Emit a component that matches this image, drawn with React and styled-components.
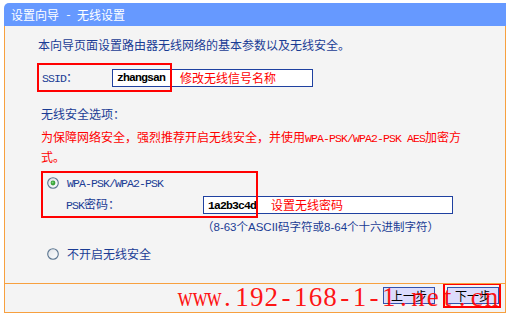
import React from "react";
import styled, { createGlobalStyle } from "styled-components";

const BLUE = "#1a3c94";
const ORANGE = "#f7a03f";
const RED = "#ff0000";
const CJK = `"Noto Sans CJK SC", "Noto Sans", sans-serif`;

const Global = createGlobalStyle`
  html, body { margin: 0; padding: 0; background: #ffffff; }
  body { font-family: ${CJK}; font-size: 12px; }
`;

const Panel = styled.div`
  width: 502px;
  margin: 3px 0 0 4px;
  box-sizing: border-box;
`;

const TitleBar = styled.div`
  height: 23px;
  background: #6699ff;
  border-top-left-radius: 5px;
  color: #ffffff;
  display: flex;
  align-items: center;
  padding-left: 7px;
  font-size: 12px;
  line-height: 14px;
`;

const Body = styled.div`
  height: 257px;
  box-sizing: border-box;
  background: #f4f4f4;
  border-left: 1px solid ${ORANGE};
  border-right: 1px solid ${ORANGE};
  padding: 10px 0 0 36px;
  color: ${BLUE};
`;

const Latin = styled.span`
  font-family: "Liberation Mono", monospace;
  font-size: 11.5px;
  letter-spacing: -0.9px;
`;

const Line = styled.div`
  line-height: 18px;
  margin-left: ${(p) => p.$indent || 0}px;
  margin-top: ${(p) => p.$top || 0}px;
  color: ${(p) => (p.$red ? RED : BLUE)};
  width: ${(p) => (p.$width ? `${p.$width}px` : "auto")};
`;

const SsidRow = styled.div`
  position: relative;
  height: 29px;
  margin-top: 9px;
  display: flex;
  align-items: center;
  padding-left: 1px;
`;

const Frame = styled.div`
  position: absolute;
  left: ${(p) => p.$left}px;
  top: 0;
  width: ${(p) => p.$width}px;
  height: 100%;
  box-sizing: border-box;
  border: 2px solid #ff0000;
  pointer-events: none;
  z-index: 2;
`;

const Label = styled.div`
  width: ${(p) => p.$width}px;
  flex: none;
  line-height: 18px;
`;

const Field = styled.div`
  width: ${(p) => p.$width}px;
  height: 18px;
  box-sizing: border-box;
  border: 1px solid #1f41a0;
  background: #ffffff;
  display: flex;
  align-items: center;
  padding-left: 4px;
  flex: none;
`;

const FieldValue = styled.span`
  font-family: "Liberation Mono", monospace;
  font-size: 11.5px;
  letter-spacing: -0.9px;
  font-weight: bold;
  color: #000000;
  width: ${(p) => p.$width}px;
  flex: none;
`;

const Note = styled.span`
  color: ${RED};
  font-size: 12px;
  line-height: 16px;
`;

const WpaBlock = styled.div`
  position: relative;
  margin-top: 5px;
  padding: 3px 0 4px 0;
`;

const RadioRow = styled.div`
  display: flex;
  align-items: center;
  height: 18px;
  padding-left: 6px;
  margin-top: ${(p) => p.$top || 0}px;
`;

const RadioLabel = styled.span`
  margin-left: 8px;
  line-height: 18px;
`;

const PskRow = styled.div`
  display: flex;
  align-items: center;
  height: 18px;
  margin-top: 4px;
  padding-left: 25px;
`;

const Hint = styled.div`
  margin-left: 161px;
  line-height: 18px;
  font-family: "Liberation Sans", ${CJK};
  font-size: 11.5px;
  color: ${BLUE};
`;

const Footer = styled.div`
  position: relative;
  height: 25px;
  background: #f4f4f4;
  border: 1px solid ${ORANGE};
  display: flex;
  justify-content: flex-end;
  align-items: flex-start;
  gap: 12px;
  padding: 3px 6px 0 0;
  box-sizing: content-box;
  overflow: hidden;
`;

const ButtonWrap = styled.div`
  position: relative;
`;

const Button = styled.button`
  width: 52px;
  height: 17px;
  box-sizing: border-box;
  border: 1px solid #3152ad;
  background: #dcdcfc;
  color: #000000;
  font-family: ${CJK};
  font-size: 12px;
  line-height: 15px;
  padding: 0;
  display: block;
`;

const ButtonFrame = styled.div`
  position: absolute;
  left: -4px;
  top: -4px;
  right: -2px;
  bottom: -4px;
  border: 2px solid #ff0000;
  pointer-events: none;
  z-index: 2;
`;

const Watermark = styled.div`
  position: absolute;
  left: 171px;
  top: 0;
  display: flex;
  font-family: "Liberation Serif", serif;
  font-size: 27px;
  line-height: 27px;
  color: rgba(255, 0, 0, 0.92);
  pointer-events: none;
  white-space: nowrap;
  z-index: 1;
`;

const Glyph = styled.span`
  display: inline-block;
  width: 14.68px;
  text-align: center;
  transform: ${(p) => (p.$narrow ? "scaleX(0.78)" : "none")};
`;

function Radio({ checked }) {
  const id = checked ? "rg1" : "rg2";
  return (
    <svg width="12" height="12" viewBox="0 0 12 12" style={{ flex: "none" }}>
      <defs>
        <linearGradient id={id} x1="0" y1="0" x2="1" y2="1">
          <stop offset="0" stopColor="#dfe3e8" />
          <stop offset="1" stopColor="#ffffff" />
        </linearGradient>
      </defs>
      <circle cx="6" cy="6" r="5.3" fill={`url(#${id})`} stroke="#5b7590" strokeWidth="1.1" />
      {checked && <circle cx="6" cy="6" r="2.4" fill="#3aa23a" />}
      {checked && <circle cx="5.6" cy="5.6" r="1" fill="#7bd87b" />}
    </svg>
  );
}

const WM = "www.192-168-1-1.net.cn";

export default function App() {
  return (
    <>
      <Global />
      <Panel>
        <TitleBar>
          设置向导<Latin>{"\u00a0-\u00a0"}</Latin>无线设置
        </TitleBar>
        <Body>
          <Line $indent={-3}>本向导页面设置路由器无线网络的基本参数以及无线安全。</Line>
          <SsidRow>
            <Label $width={70}>
              <Latin>SSID</Latin>：
            </Label>
            <Field $width={201}>
              <FieldValue $width={63}>zhangsan</FieldValue>
              <Note>修改无线信号名称</Note>
            </Field>
            <Frame $left={-4} $width={135} />
          </SsidRow>
          <Line $top={13}>无线安全选项：</Line>
          <Line $top={5} $red $width={426}>
            为保障网络安全，强烈推荐开启无线安全，并使用<Latin>WPA-PSK/WPA2-PSK AES</Latin>加密方式。
          </Line>
          <WpaBlock>
            <RadioRow>
              <Radio checked />
              <RadioLabel>
                <Latin>WPA-PSK/WPA2-PSK</Latin>
              </RadioLabel>
            </RadioRow>
            <PskRow>
              <Label $width={137}>
                <Latin>PSK</Latin>密码：
              </Label>
              <Field $width={250}>
                <FieldValue $width={63}>1a2b3c4d</FieldValue>
                <Note>设置无线密码</Note>
              </Field>
            </PskRow>
            <Frame $left={0} $width={217} />
          </WpaBlock>
          <Hint>（8-63个ASCII码字符或8-64个十六进制字符）</Hint>
          <RadioRow $top={9}>
            <Radio />
            <RadioLabel>不开启无线安全</RadioLabel>
          </RadioRow>
        </Body>
        <Footer>
          <ButtonWrap>
            <Button>上一步</Button>
          </ButtonWrap>
          <ButtonWrap>
            <Button>下一步</Button>
            <ButtonFrame />
          </ButtonWrap>
          <Watermark>
            {WM.split("").map((c, i) => (
              <Glyph key={i} $narrow={c === "w"}>
                {c}
              </Glyph>
            ))}
          </Watermark>
        </Footer>
      </Panel>
    </>
  );
}
